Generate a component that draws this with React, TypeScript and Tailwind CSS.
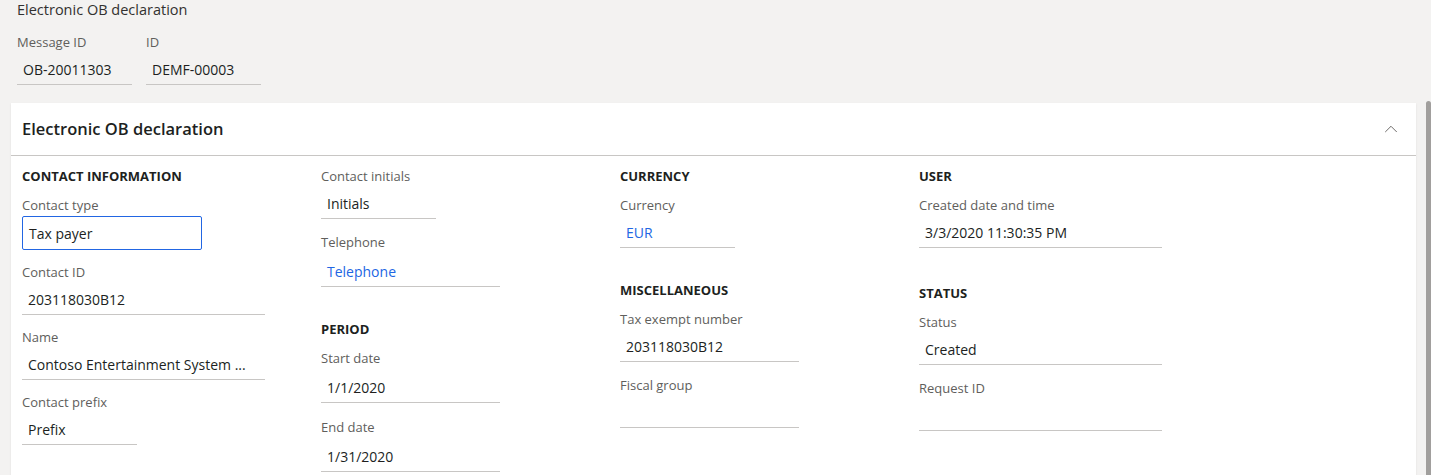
import { ChevronUp } from "lucide-react";

type Field = { label: string; value?: string; width: string; link?: boolean; focused?: boolean; gap?: string; tall?: boolean };
type Section = { title?: string; space?: string; fields: Field[] };

const columns: Section[][] = [
  [
    {
      title: "CONTACT INFORMATION",
      fields: [
        { label: "Contact type", value: "Tax payer", width: "w-[180px]", focused: true },
        { label: "Contact ID", value: "203118030B12", width: "w-[243px]" },
        { label: "Name", value: "Contoso Entertainment System ...", width: "w-[243px]" },
        { label: "Contact prefix", value: "Prefix", width: "w-[115px]" },
      ],
    },
  ],
  [
    {
      fields: [
        { label: "Contact initials", value: "Initials", width: "w-[115px]" },
        { label: "Telephone", value: "Telephone", width: "w-[179px]", link: true, gap: "mt-[1px]", tall: true },
      ],
    },
    {
      title: "PERIOD",
      fields: [
        { label: "Start date", value: "1/1/2020", width: "w-[179px]", tall: true },
        { label: "End date", value: "1/31/2020", width: "w-[179px]", gap: "mt-[2px]", tall: true },
      ],
    },
  ],
  [
    {
      title: "CURRENCY",
      fields: [{ label: "Currency", value: "EUR", width: "w-[115px]", link: true }],
    },
    {
      title: "MISCELLANEOUS",
      fields: [
        { label: "Tax exempt number", value: "203118030B12", width: "w-[179px]" },
        { label: "Fiscal group", width: "w-[179px]", gap: "mt-[1px]" },
      ],
    },
  ],
  [
    {
      title: "USER",
      fields: [{ label: "Created date and time", value: "3/3/2020 11:30:35 PM", width: "w-[243px]" }],
    },
    {
      title: "STATUS",
      space: "pt-[23px]",
      fields: [
        { label: "Status", value: "Created", width: "w-[243px]" },
        { label: "Request ID", width: "w-[243px]", gap: "mt-[1px]" },
      ],
    },
  ],
];

function FormField({ field }: { field: Field }) {
  return (
    <div className={`mb-3 ${field.gap ?? ""}`}>
      <div className="h-[20px] text-[13px] leading-[20px] text-[#605e5c]">{field.label}</div>
      {field.focused ? (
        <div className={`${field.width} mt-[1px] flex h-[34px] items-center rounded-[2px] border border-[#2266e3] px-[6px] pt-[1px] text-[14px] text-[#201f1e]`}>
          {field.value}
        </div>
      ) : (
        <div
          className={`${field.width} flex ${field.tall ? "h-[35px] pt-[5px]" : "h-[33px] pt-[3px]"} items-center border-b border-[#c8c6c4] px-[6px] text-[14px] whitespace-nowrap ${
            field.link ? "text-[#2266e3]" : "text-[#201f1e]"
          }`}
        >
          {field.value}
        </div>
      )}
    </div>
  );
}

export default function App() {
  return (
    <div className="flex h-[475px] flex-col overflow-hidden bg-[#f3f2f1] font-['Segoe_UI','Open_Sans',sans-serif] text-[#323130]">
      {/* page header */}
      <div className="px-[17px] pb-[16px]">
        <div className="h-[20px] text-[14.5px] leading-[20px] text-[#323130]">Electronic OB declaration</div>
        <div className="mt-3 flex gap-[14px]">
          <div>
            <div className="h-[20px] text-[13px] leading-[20px] text-[#605e5c]">Message ID</div>
            <div className="flex h-[33px] w-[115px] items-center border-b border-[#c8c6c4] px-[6px] pt-[2px] text-[14px] text-[#201f1e]">
              OB-20011303
            </div>
          </div>
          <div>
            <div className="h-[20px] text-[13px] leading-[20px] text-[#605e5c]">ID</div>
            <div className="flex h-[33px] w-[115px] items-center border-b border-[#c8c6c4] px-[6px] pt-[2px] text-[14px] text-[#201f1e]">
              DEMF-00003
            </div>
          </div>
        </div>
      </div>

      {/* scroll region */}
      <div className="flex flex-1">
        <div className="flex-1 pl-[11px] pr-[10px] pt-[2px]">
          <div className="min-h-[400px] bg-white shadow-[0_1px_2px_rgba(0,0,0,0.08)]">
            <div className="flex h-[53px] items-center justify-between border-b border-[#c8c6c4] pl-[11px] pr-[14px]">
              <span className="text-[16.5px] font-semibold text-[#201f1e]">Electronic OB declaration</span>
              <ChevronUp className="h-[22px] w-[22px] text-[#605e5c]" strokeWidth={1} />
            </div>
            <div className="grid grid-cols-[299px_299px_299px_299px] pl-[11px] pt-[10px]">
              {columns.map((col, ci) => (
                <div key={ci} className="flex flex-col">
                  {col.map((sec, si) => (
                    <div key={si} className={`flex flex-col ${si > 0 ? sec.space ?? "pt-5" : ""}`}>
                      {sec.title && (
                        <div className="mb-[9px] h-[20px] text-[13px] font-bold leading-[20px] text-[#201f1e]">
                          {sec.title}
                        </div>
                      )}
                      {sec.fields.map((f) => (
                        <FormField key={f.label} field={f} />
                      ))}
                    </div>
                  ))}
                </div>
              ))}
            </div>
          </div>
        </div>
        <div className="w-[5px] rounded-t-[3px] bg-[#a19f9d]" />
      </div>
    </div>
  );
}
